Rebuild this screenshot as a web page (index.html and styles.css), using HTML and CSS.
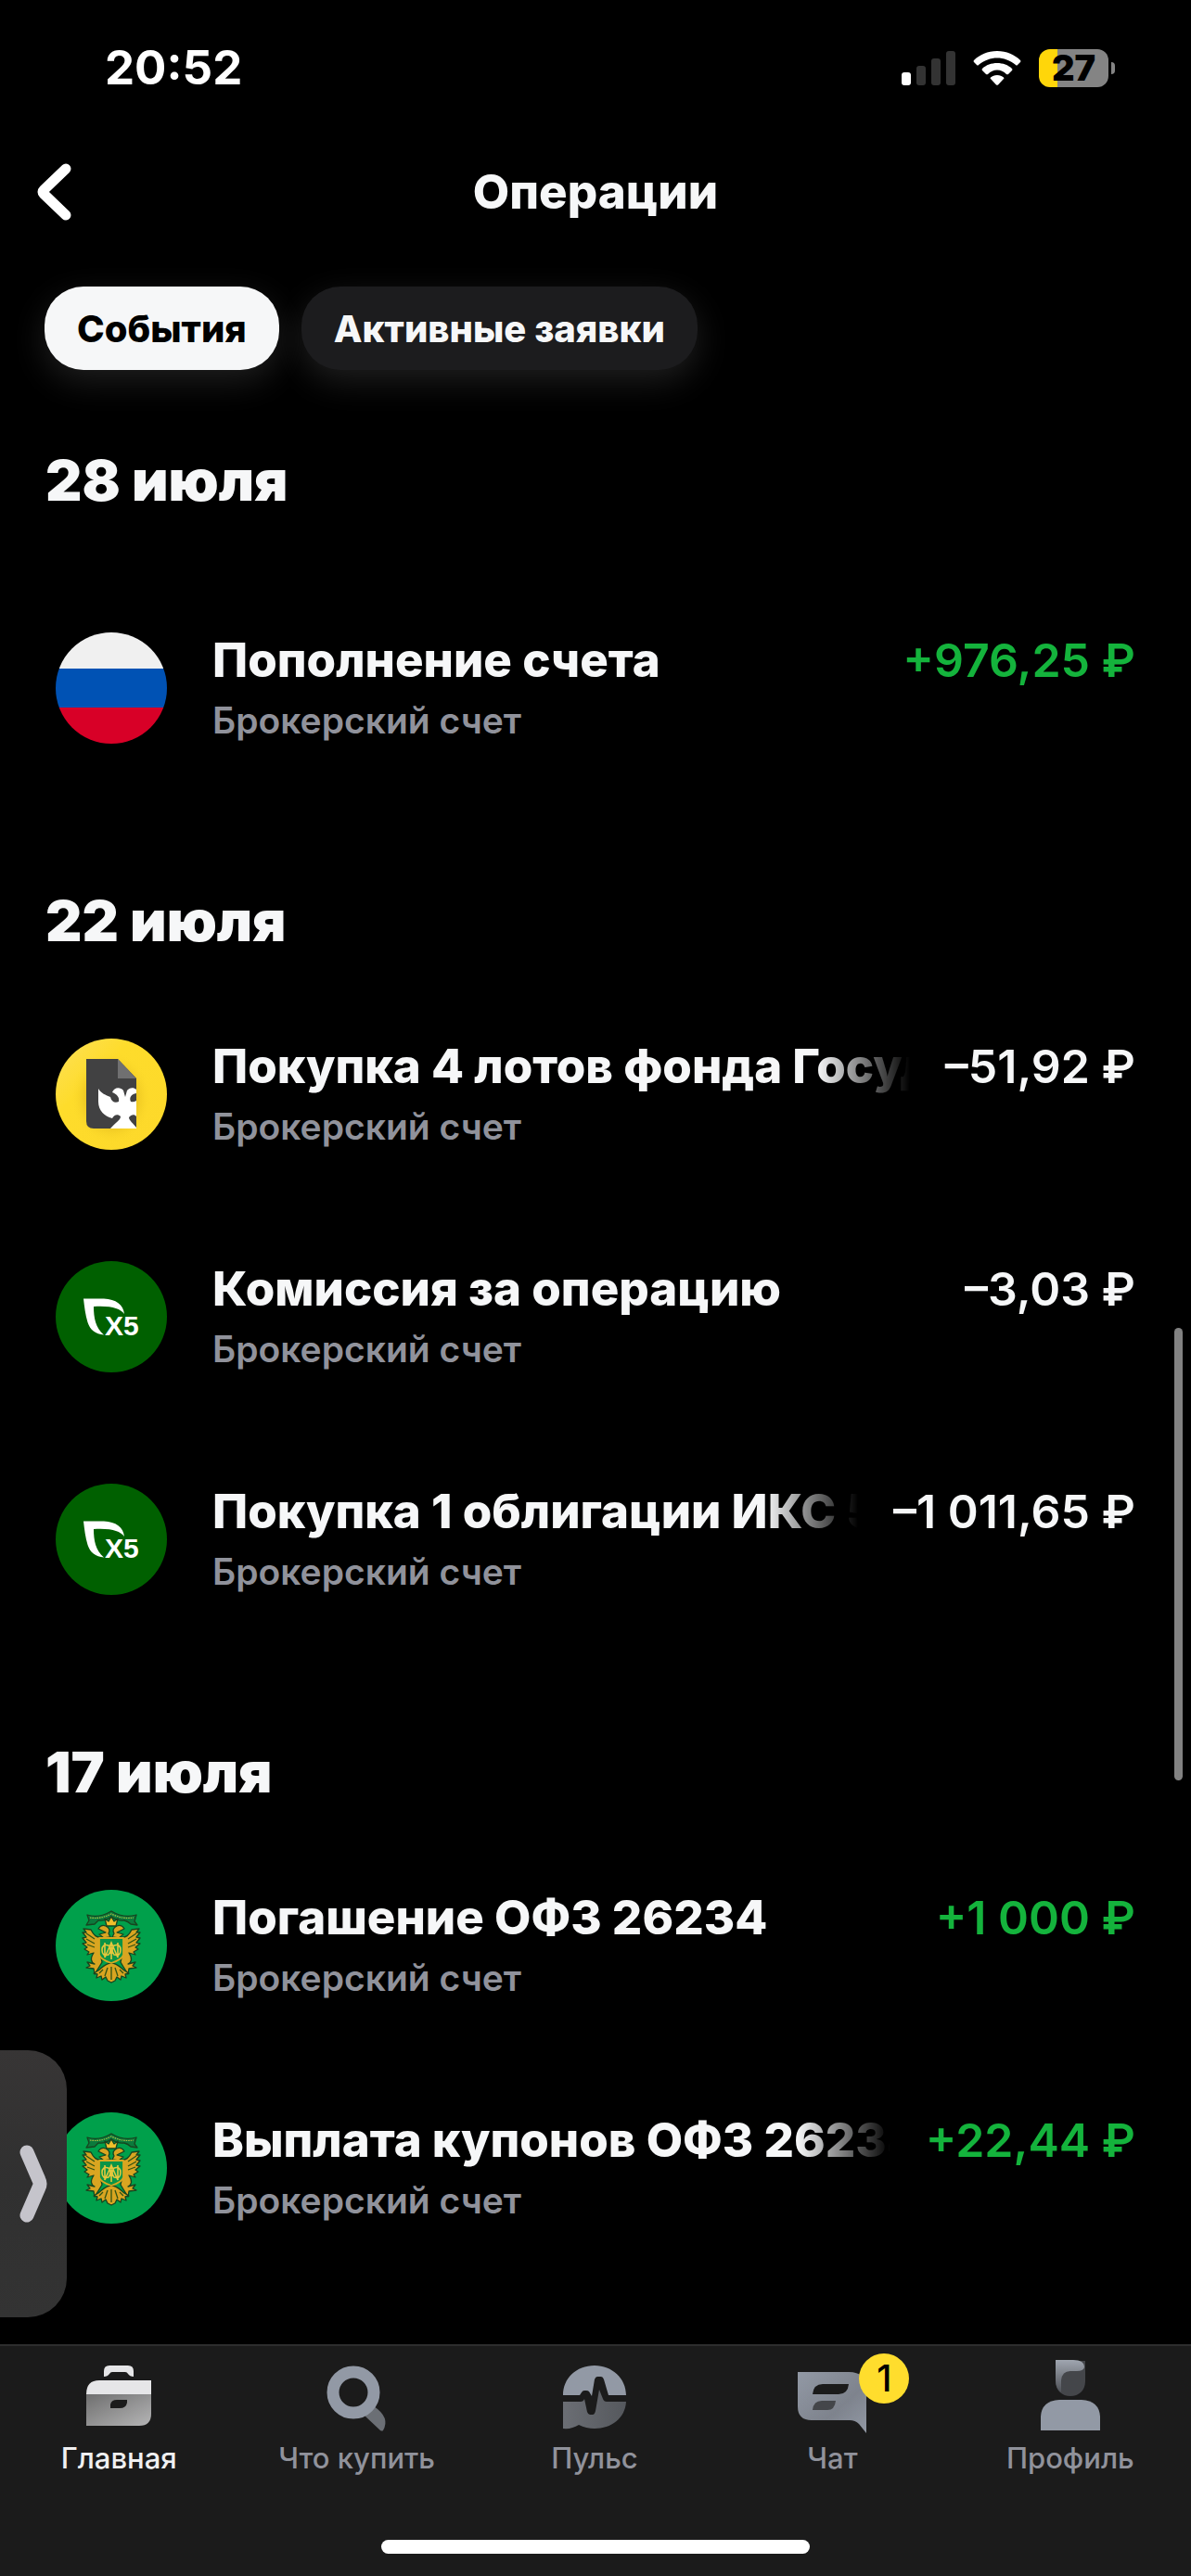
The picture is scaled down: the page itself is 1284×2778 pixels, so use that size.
FILE: index.html
```html
<!DOCTYPE html>
<html lang="ru">
<head>
<meta charset="utf-8">
<meta name="viewport" content="width=device-width, initial-scale=1">
<title>Операции</title>
<link rel="stylesheet" href="styles.css">
</head>
<body>
<svg class="defs" width="0" height="0" aria-hidden="true">
  <defs>
    <linearGradient id="yellow" x1="0" y1="0" x2="1" y2="1">
      <stop offset="0" stop-color="#fde05a"/><stop offset=".35" stop-color="#fedc2b"/><stop offset="1" stop-color="#fdd82a"/>
    </linearGradient>
    <radialGradient id="glow">
      <stop offset=".4" stop-color="#c79a10" stop-opacity=".75"/><stop offset="1" stop-color="#fedc2b" stop-opacity="0"/>
    </radialGradient>
    <linearGradient id="case" x1="0" y1="0" x2="1" y2="1">
      <stop offset="0" stop-color="#6f6f6f"/><stop offset="1" stop-color="#b5b5b6"/>
    </linearGradient>
    <linearGradient id="chat" x1="0" y1="0" x2="1" y2="1">
      <stop offset="0" stop-color="#9299a5"/><stop offset=".6" stop-color="#7e838d"/><stop offset="1" stop-color="#9299a5"/>
    </linearGradient>
    <linearGradient id="pulse" x1="0" y1="0" x2="1" y2="0">
      <stop offset="0" stop-color="#6b6e74"/><stop offset="1" stop-color="#55585d"/>
    </linearGradient>
    <linearGradient id="hair" x1="0" y1="0" x2="0" y2="1">
      <stop offset="0" stop-color="#a0a6b0"/><stop offset="1" stop-color="#4e5157"/>
    </linearGradient>
    <symbol id="x5" viewBox="0 0 120 120">
      <circle cx="60" cy="60" r="60" fill="#006000"/>
      <path fill="#fff" d="M30 40.500H52C65 41 73 47 74 57C69 51 61 48 41 49C41 61 43 72 52 79.500C43 79 37 74 34.500 66C32 58 31 49 30 40.500Z"/>
      <text x="53" y="80" class="x5-text">X5</text>
    </symbol>
    <symbol id="emblem" viewBox="0 0 120 120">
      <circle cx="60" cy="60" r="60" fill="#00a04b"/>
      <g stroke="#17441f" stroke-width="1.300" stroke-linejoin="round">
        <path fill="#0b7a3c" d="M34 27Q47 31 60 23Q73 31 87 27L85 34L88 38L81 37Q78 34 74 33Q67 34 60 29Q53 34 46 33L42 37L33 38L36 33Z"/>
        <g fill="#d9a521">
          <path id="wing" d="M50 51C44 52 41 49 38 43L30 42L33 46L29 46L33 51L29 52L33 57L29 58L34 62L31 64L36 67L34 70L41 68C37 74 38 78 42 80L34 78L37 82L33 84L41 85L42 91L47 83L50 78L48 68L49 57Z"/>
          <use href="#wing" transform="matrix(-1 0 0 1 120 0)"/>
          <path id="head" d="M59 51L52 52L47 48L54 46L48 43L46 42Q49 37 54 39Q60 42 57 47Z"/>
          <use href="#head" transform="matrix(-1 0 0 1 120 0)"/>
          <path fill="#efbf2b" d="M55 39L53 31L57 34L60 29L63 34L67 31L65 39Z"/>
          <path d="M60 79C54 79 51 83 46 87L41 90L45 91L44 95L49 93L50 97L54 94L56 98L60 100L64 98L66 94L70 97L71 93L76 95L75 91L79 90L74 87C69 83 66 79 60 79Z"/>
        </g>
        <path fill="#0a9447" stroke="#d8a820" stroke-width="1.800" d="M47 52H73V70Q72 75 60 79Q48 75 47 70Z"/>
      </g>
      <g fill="none" stroke="#e5c73d" stroke-width="1.600">
        <path d="M53 57V73M53 73L60 57L67 73V57M60 57V75M50 65Q50 58 57 60Q61 65 57 70Q50 72 50 65M70 65Q70 58 63 60Q59 65 63 70Q70 72 70 65"/>
      </g>
      <path fill="none" stroke="#315313" stroke-width="1.300" d="M60 83V97M56 84L53 93M64 84L67 93M51 86L47 90M69 86L73 90M33 47L42 53M33 53L42 58M34 59L42 62M87 47L78 53M87 53L78 58M86 59L78 62"/>
      <path fill="none" stroke="#b7bd42" stroke-width="1.200" stroke-dasharray="1.500 1" d="M37 30Q48 32 60 26Q72 32 84 30"/>
    </symbol>
  </defs>
</svg>

<div class="app">
  <div class="status">
    <time class="clock">20:52</time>
    <div class="indicators">
      <svg width="58" height="38" viewBox="0 0 58 38" aria-hidden="true">
        <rect x="0" y="24" width="10" height="14" rx="3" fill="#fff"/>
        <g fill="#333"><rect x="16" y="17" width="10" height="21" rx="3"/><rect x="32" y="9" width="10" height="29" rx="3"/><rect x="48" y="1" width="10" height="37" rx="3"/></g>
      </svg>
      <svg width="52" height="38" viewBox="0 0 52 38" aria-hidden="true">
        <path fill="#fff" d="M26 1C36 1 45 5 51 11Q52 12 51 13L48 16Q47 17 46 16C40 11 33 8.500 26 8.500S12 11 6 16Q5 17 4 16L1 13Q0 12 1 11C7 5 16 1 26 1ZM26 14C32 14 38 16 42 20Q43 21 42 22L38 26Q37 26.500 36 26C33 23 30 21.500 26 21.500S19 23 16 26Q15 26.500 14 26L10 22Q9 21 10 20C14 16 20 14 26 14ZM26 27C29 27 31 28 33 29.500Q34 30.500 33 31L27 37.500Q26 38 25 37.500L19 31Q18 30.500 19 29.500C21 28 23 27 26 27Z"/>
      </svg>
      <div class="battery"><span class="charge">27</span></div>
    </div>
  </div>

  <header class="bar">
    <button class="back" type="button" aria-label="Назад">
      <svg width="38" height="62" viewBox="0 0 38 62" aria-hidden="true"><path d="M31 6L7 29Q5 31 7 33L31 56" fill="none" stroke="#fff" stroke-width="11" stroke-linecap="round"/></svg>
    </button>
    <h1 class="title">Операции</h1>
  </header>

  <div class="chips">
    <button class="chip chip-on" type="button">События</button>
    <button class="chip" type="button">Активные заявки</button>
  </div>

  <main class="list">
    <section class="day day-first">
      <h2 class="date">28 июля</h2>
      <article class="row">
        <svg class="logo" viewBox="0 0 120 120" aria-hidden="true">
          <clipPath id="round"><circle cx="60" cy="60" r="60"/></clipPath>
          <g clip-path="url(#round)"><path fill="#f0f0f0" d="M0 0H120V39H0Z"/><path fill="#0052b4" d="M0 39H120V81H0Z"/><path fill="#d80027" d="M0 81H120V120H0Z"/></g>
        </svg>
        <div class="info">
          <div class="line"><h3 class="name">Пополнение счета</h3><span class="sum plus">+976,25 ₽</span></div>
          <p class="account">Брокерский счет</p>
        </div>
      </article>
    </section>

    <section class="day">
      <h2 class="date">22 июля</h2>
      <article class="row">
        <svg class="logo" viewBox="0 0 120 120" aria-hidden="true">
          <circle cx="60" cy="60" r="60" fill="url(#yellow)"/>
          <ellipse cx="60" cy="64" rx="44" ry="50" fill="url(#glow)"/>
          <path fill="#414142" d="M33 22H67L87 43V97H41Q33 97 33 89Z"/>
          <path fill="#707071" d="M67 22L87 43H67Z"/>
          <path fill="#fff" d="M46 54C49 59 54 61 59 63C60 68 64 70 68 68C69 63 66 60 61 58C63 52 70 52 73 56L75 63L77 56C79 53 84 52 87 55V59C81 60 79 64 81 68Q84 69 87 67V84C85 81 81 82 79 85C79 88 84 92 87 96V97H59C64 91 70 88 70 84C67 81 63 82 61 86C53 84 46 78 46 68Z"/>
        </svg>
        <div class="info">
          <div class="line"><h3 class="name fade">Покупка 4 лотов фонда Госуд</h3><span class="sum">–51,92 ₽</span></div>
          <p class="account">Брокерский счет</p>
        </div>
      </article>
      <article class="row">
        <svg class="logo" aria-hidden="true"><use href="#x5"/></svg>
        <div class="info">
          <div class="line"><h3 class="name">Комиссия за операцию</h3><span class="sum">–3,03 ₽</span></div>
          <p class="account">Брокерский счет</p>
        </div>
      </article>
      <article class="row">
        <svg class="logo" aria-hidden="true"><use href="#x5"/></svg>
        <div class="info">
          <div class="line"><h3 class="name fade">Покупка 1 облигации ИКС 5</h3><span class="sum">–1 011,65 ₽</span></div>
          <p class="account">Брокерский счет</p>
        </div>
      </article>
    </section>

    <section class="day">
      <h2 class="date">17 июля</h2>
      <article class="row">
        <svg class="logo" aria-hidden="true"><use href="#emblem"/></svg>
        <div class="info">
          <div class="line"><h3 class="name">Погашение ОФЗ 26234</h3><span class="sum plus">+1 000 ₽</span></div>
          <p class="account">Брокерский счет</p>
        </div>
      </article>
      <article class="row">
        <svg class="logo" aria-hidden="true"><use href="#emblem"/></svg>
        <div class="info">
          <div class="line"><h3 class="name fade">Выплата купонов ОФЗ 26234</h3><span class="sum plus">+22,44 ₽</span></div>
          <p class="account">Брокерский счет</p>
        </div>
      </article>
    </section>
  </main>

  <nav class="tabs">
    <ul class="tab-list">
      <li><a class="tab tab-on" href="#home">
        <svg class="icon" viewBox="0 0 84 84" aria-hidden="true">
          <path fill="#e6e6e8" d="M26 19V13Q26 7 32 7H52Q58 7 58 13V19Q54 19 52 16Q51 14 49 14H35Q33 14 32 16Q30 19 26 19Z"/>
          <path fill="#e6e6e8" d="M7 38Q7 23 21 23H77V38Z"/>
          <path fill="url(#case)" d="M7 38H77V59Q77 72 64 72H7Z"/>
          <path fill="#1b1b1b" d="M33 53V49Q34 44 40 44H51V47Q50 53 43 53Z"/>
        </svg>Главная</a></li>
      <li><a class="tab" href="#buy">
        <svg class="icon" viewBox="0 0 84 84" aria-hidden="true">
          <path fill="#6b6f75" d="M50 61L60 51Q78 63 70 77Q69 78 67 77Z"/>
          <circle cx="38" cy="36" r="22" fill="none" stroke="#9299a5" stroke-width="13"/>
        </svg>Что купить</a></li>
      <li><a class="tab" href="#pulse">
        <svg class="icon" viewBox="0 0 84 84" aria-hidden="true">
          <path fill="#9299a5" d="M8 39C8 21 22 7 42 7C61 7 76 21 76 39H57L52 22Q51 19 49 19H45Q43 19 42 22L39 40L36 35Q35 34 33 34H31Q29 34 28 36L26 39Z"/>
          <path fill="url(#pulse)" d="M8 46H27Q30 46 31 43L34 57Q35 60 37 60H40Q42 60 43 56L47 33L51 43Q52 46 55 46H76C75 64 60 75 42 75Q33 75 25 71Q17 76 8 75Z"/>
        </svg>Пульс</a></li>
      <li><a class="tab" href="#chat">
        <span class="icon-box">
          <svg class="icon" viewBox="0 0 84 84" aria-hidden="true">
            <path fill="url(#chat)" d="M5 14H60Q79 14 79 32V80L71 70Q67 66 61 66H20Q5 66 5 51Z"/>
            <path fill="#1b1b1b" d="M21 38Q22 27 32 27H60Q59 38 49 38Z"/>
            <path fill="#44464a" d="M21 55Q22 45 31 45H46Q45 55 37 55Z"/>
          </svg>
          <span class="badge">1</span>
        </span>Чат</a></li>
      <li><a class="tab" href="#profile">
        <svg class="icon" viewBox="0 0 84 84" aria-hidden="true">
          <path fill="#44464a" d="M26 2H58V24C58 34 51 40 42 40S26 34 26 24Z"/>
          <path fill="url(#hair)" d="M26 1H45Q57 1 57 9Q56 13 49 13H42Q33 13 32 23V36Q26 32 26 22Z"/>
          <path fill="#9299a5" d="M10 77V62Q11 45 30 44H54Q73 45 74 62V77Z"/>
        </svg>Профиль</a></li>
    </ul>
    <div class="home-line"></div>
  </nav>

  <div class="thumb"></div>
  <button class="drawer" type="button" aria-label="Открыть панель">
    <svg width="32" height="84" viewBox="0 0 32 84" aria-hidden="true"><path d="M9 8L22 38Q24 42 22 46L9 76" fill="none" stroke="#c5c4cb" stroke-width="15" stroke-linecap="round" stroke-linejoin="round"/></svg>
  </button>
</div>
</body>
</html>
```
FILE: styles.css
```css
* {
  box-sizing: border-box;
}

body {
  margin: 0;
  background: #000;
  color: #f6f7f8;
  font-family: Inter, "Liberation Sans", sans-serif;
}

h1, h2, h3, p, ul {
  margin: 0;
  padding: 0;
}

button {
  border: 0;
  font: inherit;
  color: inherit;
}

svg {
  display: block;
}

.defs {
  position: absolute;
}

.app {
  position: relative;
  display: flex;
  flex-direction: column;
  min-height: 100vh;
}

/* Status bar */
.status {
  display: flex;
  align-items: center;
  justify-content: space-between;
  padding: 42px 81px 0 113px;
}

.clock {
  color: #fff;
  font-size: 51px;
  font-weight: 700;
  line-height: 62px;
}

.indicators {
  display: flex;
  align-items: center;
  gap: 19px;
}

.battery {
  position: relative;
  width: 75px;
  height: 41px;
  border-radius: 12px;
  background: linear-gradient(90deg, #ffd60a 20px, #848484 20px);
  margin-right: 8px;
}

.battery::after {
  content: "";
  position: absolute;
  left: 78px;
  top: 14px;
  width: 4px;
  height: 13px;
  border-radius: 0 4px 4px 0;
  background: #848484;
}

.charge {
  display: block;
  color: #000;
  font-size: 38px;
  font-weight: 900;
  line-height: 41px;
  text-align: center;
}

/* Title bar */
.bar {
  display: grid;
  grid-template-columns: 120px 1fr 120px;
  align-items: center;
  height: 126px;
  margin-top: 40px;
}

.back {
  padding: 0 40px;
  background: none;
}

.title {
  text-align: center;
  font-size: 51px;
  font-weight: 800;
  line-height: 62px;
}

/* Filter chips */
.chips {
  display: flex;
  gap: 24px;
  padding: 39px 48px 0;
}

.chip {
  height: 90px;
  padding: 0 35px;
  border-radius: 42px;
  background: #1c1c1e;
  box-shadow: 0 12px 36px rgba(255, 255, 255, .12);
  font-size: 40px;
  font-weight: 800;
}

.chip-on {
  background: #f6f7f8;
  color: #000;
}

/* Operations */
.list {
  flex: 1;
  padding: 0 60px;
}

.date {
  margin-left: -11px;
  padding: 95px 0 31px;
  font-size: 61px;
  font-weight: 900;
  line-height: 72px;
}

.day-first .date {
  padding: 83px 0 68px;
}

.row {
  display: flex;
  align-items: center;
  gap: 49px;
  height: 240px;
}

.logo {
  flex: none;
  width: 120px;
  height: 120px;
}

.x5-text {
  fill: #fff;
  font-family: "Liberation Sans", sans-serif;
  font-size: 30px;
  font-weight: 700;
}

.info {
  flex: 1;
  min-width: 0;
  padding-top: 4px;
}

.line {
  display: flex;
  gap: 28px;
}

.name {
  flex: 1;
  min-width: 0;
  overflow: hidden;
  white-space: nowrap;
  font-size: 51px;
  font-weight: 800;
  line-height: 66px;
}

.fade {
  mask-image: linear-gradient(270deg, transparent 10px, #000 110px);
}

.sum {
  white-space: nowrap;
  font-size: 50px;
  font-weight: 600;
  line-height: 66px;
}

.plus {
  color: #14b33c;
}

.account {
  color: #90929b;
  font-size: 39px;
  font-weight: 600;
  line-height: 64px;
}

/* Bottom navigation */
.tabs {
  border-top: 2px solid #2d2d2e;
  background: #1b1b1b;
}

.tab-list {
  display: grid;
  grid-template-columns: repeat(5, 1fr);
  padding-right: 2px;
  list-style: none;
}

.tab {
  display: flex;
  flex-direction: column;
  align-items: center;
  gap: 5px;
  padding-top: 14px;
  color: #90929b;
  font-size: 31px;
  font-weight: 500;
  line-height: 36px;
  text-decoration: none;
}

.tab-on {
  color: #f0f0f1;
}

.icon {
  width: 84px;
  height: 84px;
}

.icon-box {
  position: relative;
}

.badge {
  position: absolute;
  left: 71px;
  top: -6px;
  width: 54px;
  height: 54px;
  border-radius: 50%;
  background: #ffdd2d;
  color: #000;
  font-size: 39px;
  line-height: 54px;
  text-align: center;
}

.home-line {
  width: 36%;
  height: 15px;
  margin: 70px auto 24px;
  border-radius: 8px;
  background: #fff;
}

/* Floating parts over the list */
.thumb {
  position: absolute;
  right: 9px;
  bottom: 858px;
  width: 9px;
  height: 488px;
  border-radius: 5px;
  background: #828282;
}

.drawer {
  position: absolute;
  left: 0;
  bottom: 279px;
  width: 72px;
  height: 288px;
  padding: 0 20px;
  border-radius: 0 42px 42px 0;
  background: linear-gradient(#373535, #303030 50%, #333);
}
```
